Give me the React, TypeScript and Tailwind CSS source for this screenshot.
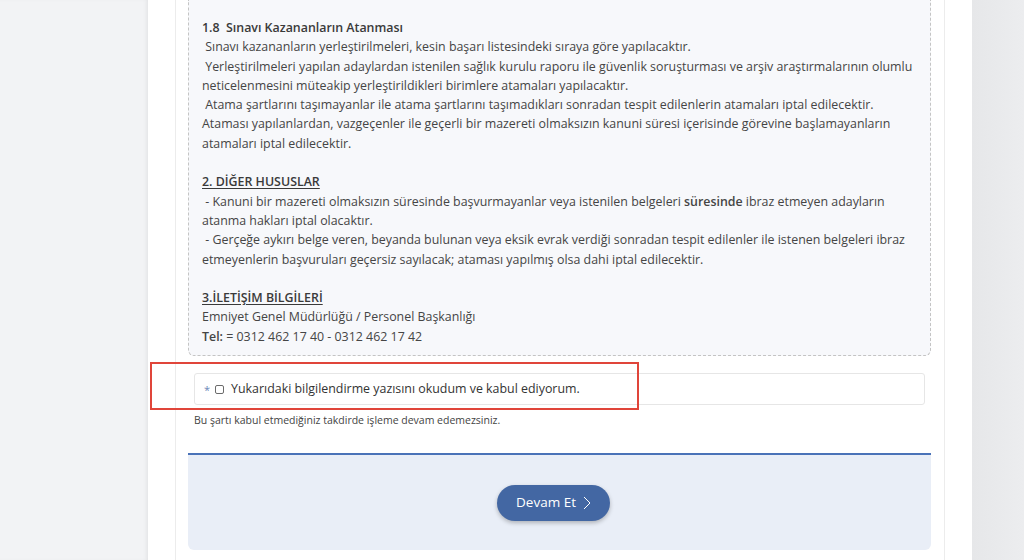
import React from 'react';

const bodyLines: { text: React.ReactNode; kind?: 'head' | 'under' | 'blank' }[] = [
    { text: '1.8  Sınavı Kazananların Atanması', kind: 'head' },
    { text: ' Sınavı kazananların yerleştirilmeleri, kesin başarı listesindeki sıraya göre yapılacaktır.' },
    { text: ' Yerleştirilmeleri yapılan adaylardan istenilen sağlık kurulu raporu ile güvenlik soruşturması ve arşiv araştırmalarının olumlu' },
    { text: 'neticelenmesini müteakip yerleştirildikleri birimlere atamaları yapılacaktır.' },
    { text: ' Atama şartlarını taşımayanlar ile atama şartlarını taşımadıkları sonradan tespit edilenlerin atamaları iptal edilecektir.' },
    { text: 'Ataması yapılanlardan, vazgeçenler ile geçerli bir mazereti olmaksızın kanuni süresi içerisinde görevine başlamayanların' },
    { text: 'atamaları iptal edilecektir.' },
    { text: '', kind: 'blank' },
    { text: '2. DİĞER HUSUSLAR', kind: 'under' },
    {
        text: (
            <>
                {' - Kanuni bir mazereti olmaksızın süresinde başvurmayanlar veya istenilen belgeleri '}
                <span className="font-semibold">süresinde</span>
                {' ibraz etmeyen adayların'}
            </>
        ),
    },
    { text: 'atanma hakları iptal olacaktır.' },
    { text: ' - Gerçeğe aykırı belge veren, beyanda bulunan veya eksik evrak verdiği sonradan tespit edilenler ile istenen belgeleri ibraz' },
    { text: 'etmeyenlerin başvuruları geçersiz sayılacak; ataması yapılmış olsa dahi iptal edilecektir.' },
    { text: '', kind: 'blank' },
    { text: '3.İLETİŞİM BİLGİLERİ', kind: 'under' },
    { text: 'Emniyet Genel Müdürlüğü / Personel Başkanlığı' },
    {
        text: (
            <>
                <span className="font-semibold">Tel:</span>
                {' = 0312 462 17 40 - 0312 462 17 42'}
            </>
        ),
    },
];

export default function App() {
    return (
        <div
            className="relative flex h-[560px] w-full overflow-hidden bg-[#f1f2f4] text-[#454545]"
            style={{ fontFamily: '"Open Sans", "Liberation Sans", sans-serif' }}
        >
            {/* left page background */}
            <div className="w-[148px] shrink-0 bg-[#f2f3f5] shadow-[inset_-3px_0_4px_-2px_rgba(0,0,0,0.08)]" />

            {/* main white column */}
            <div className="w-[824px] shrink-0 bg-white px-[27px]">
                <div className="h-full border-x border-[#ececec] pl-[12px] pr-[13px]">
                    {/* info box */}
                    <div className="rounded-b-[6px] border border-t-0 border-dashed border-[#c4c4c4] bg-[#f7f8fb] pb-[9px] pl-[13px] pr-[8px] pt-[18px] text-[12.4px] leading-[19.3px]">
                        {bodyLines.map((l, i) => {
                            if (l.kind === 'blank') return <div key={i} className="h-[19.3px]" />;
                            if (l.kind === 'head')
                                return (
                                    <div key={i} className="whitespace-pre font-semibold text-[#3a3a3a]">
                                        {l.text}
                                    </div>
                                );
                            if (l.kind === 'under')
                                return (
                                    <div key={i} className="whitespace-pre font-semibold text-[#3a3a3a] underline underline-offset-2">
                                        {l.text}
                                    </div>
                                );
                            return (
                                <div key={i} className="whitespace-pre">
                                    {l.text}
                                </div>
                            );
                        })}
                    </div>

                    {/* consent */}
                    <div className="px-[6px] pt-[17px]">
                        <div className="flex h-[32px] items-center rounded-[3px] border border-[#e6e6e6] bg-white pl-[9px] text-[12.4px] text-[#333]">
                            <span className="mr-[5px] pt-[3px] text-[11px] text-[#6a86b8]">*</span>
                            <span className="mr-[7px] inline-block h-[9px] w-[9px] rounded-[2px] border border-[#6b6b6b] bg-white" />
                            <span>Yukarıdaki bilgilendirme yazısını okudum ve kabul ediyorum.</span>
                        </div>
                        <div className="pt-[8px] text-[10.5px] leading-[15px] text-[#444]">
                            Bu şartı kabul etmediğiniz takdirde işleme devam edemezsiniz.
                        </div>
                    </div>

                    {/* action panel */}
                    <div className="mt-[25px] flex h-[97px] items-center justify-center rounded-b-[6px] border-t-2 border-[#4a72b8] bg-[#e9eef7]">
                        <button className="mr-[12px] flex h-[36px] w-[113px] items-center justify-center gap-[7px] rounded-full bg-[#4367a3] text-[13.5px] text-white shadow-[0_2px_4px_rgba(0,0,0,0.25)]">
                            <span>Devam Et</span>
                            <svg width="8" height="14" viewBox="0 0 8 14" fill="none" stroke="white" strokeWidth="1">
                                <path d="M1 1l6 6-6 6" />
                            </svg>
                        </button>
                    </div>
                </div>
            </div>

            {/* right page background */}
            <div className="flex-1 bg-gradient-to-r from-[#e6e7e9] to-[#ecedef]" />

            {/* annotation */}
            <div className="pointer-events-none absolute left-[150px] top-[362px] h-[48px] w-[489px] border-[2px] border-[#e0453a]" />
        </div>
    );
}
